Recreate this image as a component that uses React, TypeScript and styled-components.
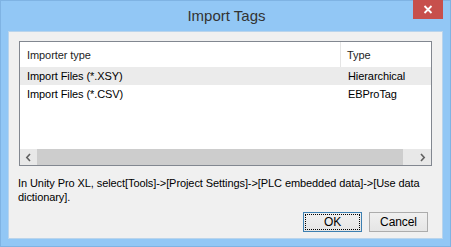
import styled, { createGlobalStyle } from 'styled-components';

const GlobalStyle = createGlobalStyle`
	html, body {
		margin: 0;
		padding: 0;
		background: #ffffff;
	}
	* {
		box-sizing: border-box;
	}
`;

type Row = {
	importer: string;
	type: string;
	selected?: boolean;
};

const rows: Row[] = [
	{ importer: 'Import Files (*.XSY)', type: 'Hierarchical', selected: true },
	{ importer: 'Import Files (*.CSV)', type: 'EBProTag' },
];

const Chevron = ({ dir }: { dir: 'left' | 'right' }) => (
	<svg width="7" height="9" viewBox="0 0 7 9">
		<path
			d={dir === 'left' ? 'M5 1 L1.8 4.5 L5 8' : 'M2 1 L5.2 4.5 L2 8'}
			fill="none"
			stroke="#606060"
			strokeWidth="1.6"
		/>
	</svg>
);

export default function App() {
	return (
		<>
			<GlobalStyle />
			<Window>
				<TitleBar>
					<span />
					<Title>Import Tags</Title>
					<CloseButton>
						<svg width="10" height="9" viewBox="0 0 10 9">
							<path d="M1.5 1 L8.5 8 M8.5 1 L1.5 8" stroke="#ffffff" strokeWidth="1.8" />
						</svg>
					</CloseButton>
				</TitleBar>
				<Client>
					<ListView>
						<HeaderRow>
							<HeaderCell $first>Importer type</HeaderCell>
							<HeaderCell>Type</HeaderCell>
						</HeaderRow>
						{rows.map((r) => (
							<ItemRow key={r.importer} $selected={r.selected}>
								<Cell>{r.importer}</Cell>
								<Cell>{r.type}</Cell>
							</ItemRow>
						))}
						<ListSpacer />
						<HScrollBar>
							<ScrollButton>
								<Chevron dir="left" />
							</ScrollButton>
							<Thumb />
							<ScrollButton>
								<Chevron dir="right" />
							</ScrollButton>
						</HScrollBar>
					</ListView>
					<Message>
						In Unity Pro XL, select[Tools]-&gt;[Project Settings]-&gt;[PLC embedded data]-&gt;[Use data
						<br />
						dictionary].
					</Message>
					<ButtonBar>
						<DialogButton $default>
							<FocusRect>OK</FocusRect>
						</DialogButton>
						<DialogButton>Cancel</DialogButton>
					</ButtonBar>
				</Client>
			</Window>
		</>
	);
}

const Window = styled.div`
	width: 451px;
	height: 247px;
	background-color: #92c7f5;
	border: 1px solid #7fb3e3;
	padding: 0 7px 7px 7px;
	display: flex;
	flex-direction: column;
	font-family: 'Liberation Sans', Arial, sans-serif;
	font-size: 11px;
	letter-spacing: -0.08px;
	color: #000000;
`;

const TitleBar = styled.div`
	height: 30px;
	display: grid;
	grid-template-columns: 1fr auto 1fr;
	align-items: start;
`;

const Title = styled.div`
	font-size: 15px;
	letter-spacing: 0;
	color: #333333;
	padding-top: 6px;
	padding-left: 2px;
`;

const CloseButton = styled.div`
	justify-self: end;
	width: 30px;
	height: 19px;
	margin-top: -1px;
	background-color: #c7504c;
	display: flex;
	align-items: center;
	justify-content: center;
`;

const Client = styled.div`
	flex: 1;
	background-color: #f0f0f0;
	border: 1px solid #b9d4ec;
	padding: 9px 10px 6px 10px;
	display: flex;
	flex-direction: column;
`;

const ListView = styled.div`
	height: 125px;
	background-color: #ffffff;
	border: 1px solid #828790;
	display: flex;
	flex-direction: column;
`;

const HeaderRow = styled.div`
	height: 25px;
	display: grid;
	grid-template-columns: 321px 1fr;
`;

const HeaderCell = styled.div<{ $first?: boolean }>`
	display: flex;
	align-items: center;
	padding-left: ${(p) => (p.$first ? '7px' : '6px')};
	border-right: ${(p) => (p.$first ? '1px solid #e5e5e5' : 'none')};
	color: #1e1e1e;
`;

const ItemRow = styled.div<{ $selected?: boolean }>`
	height: 18px;
	display: grid;
	grid-template-columns: 321px 1fr;
	background-color: ${(p) => (p.$selected ? '#ebebeb' : 'transparent')};
`;

const Cell = styled.div`
	display: flex;
	align-items: center;
	padding-left: 7px;
	white-space: nowrap;
`;

const ListSpacer = styled.div`
	flex: 1;
`;

const HScrollBar = styled.div`
	height: 16px;
	background-color: #e8e8e8;
	display: flex;
	align-items: stretch;
`;

const ScrollButton = styled.div`
	width: 17px;
	display: flex;
	align-items: center;
	justify-content: center;
`;

const Thumb = styled.div`
	width: 366px;
	background-color: #cdcdcd;
	margin-right: auto;
`;

const Message = styled.p`
	margin: 10px 0 0 -1px;
	line-height: 14px;
	white-space: nowrap;
	color: #000000;
`;

const ButtonBar = styled.div`
	margin-top: auto;
	display: flex;
	justify-content: flex-end;
	gap: 7px;
	padding-right: 4px;
`;

const DialogButton = styled.div<{ $default?: boolean }>`
	width: 59px;
	height: 20px;
	border: 1px solid ${(p) => (p.$default ? '#3c7fb1' : '#acacac')};
	background: linear-gradient(#f0f0f0, #e5e5e5);
	display: flex;
	align-items: center;
	justify-content: center;
	padding: 1px;
	font-size: 12px;
`;

const FocusRect = styled.div`
	width: 100%;
	height: 100%;
	border: 1px dotted #000000;
	display: flex;
	align-items: center;
	justify-content: center;
`;
